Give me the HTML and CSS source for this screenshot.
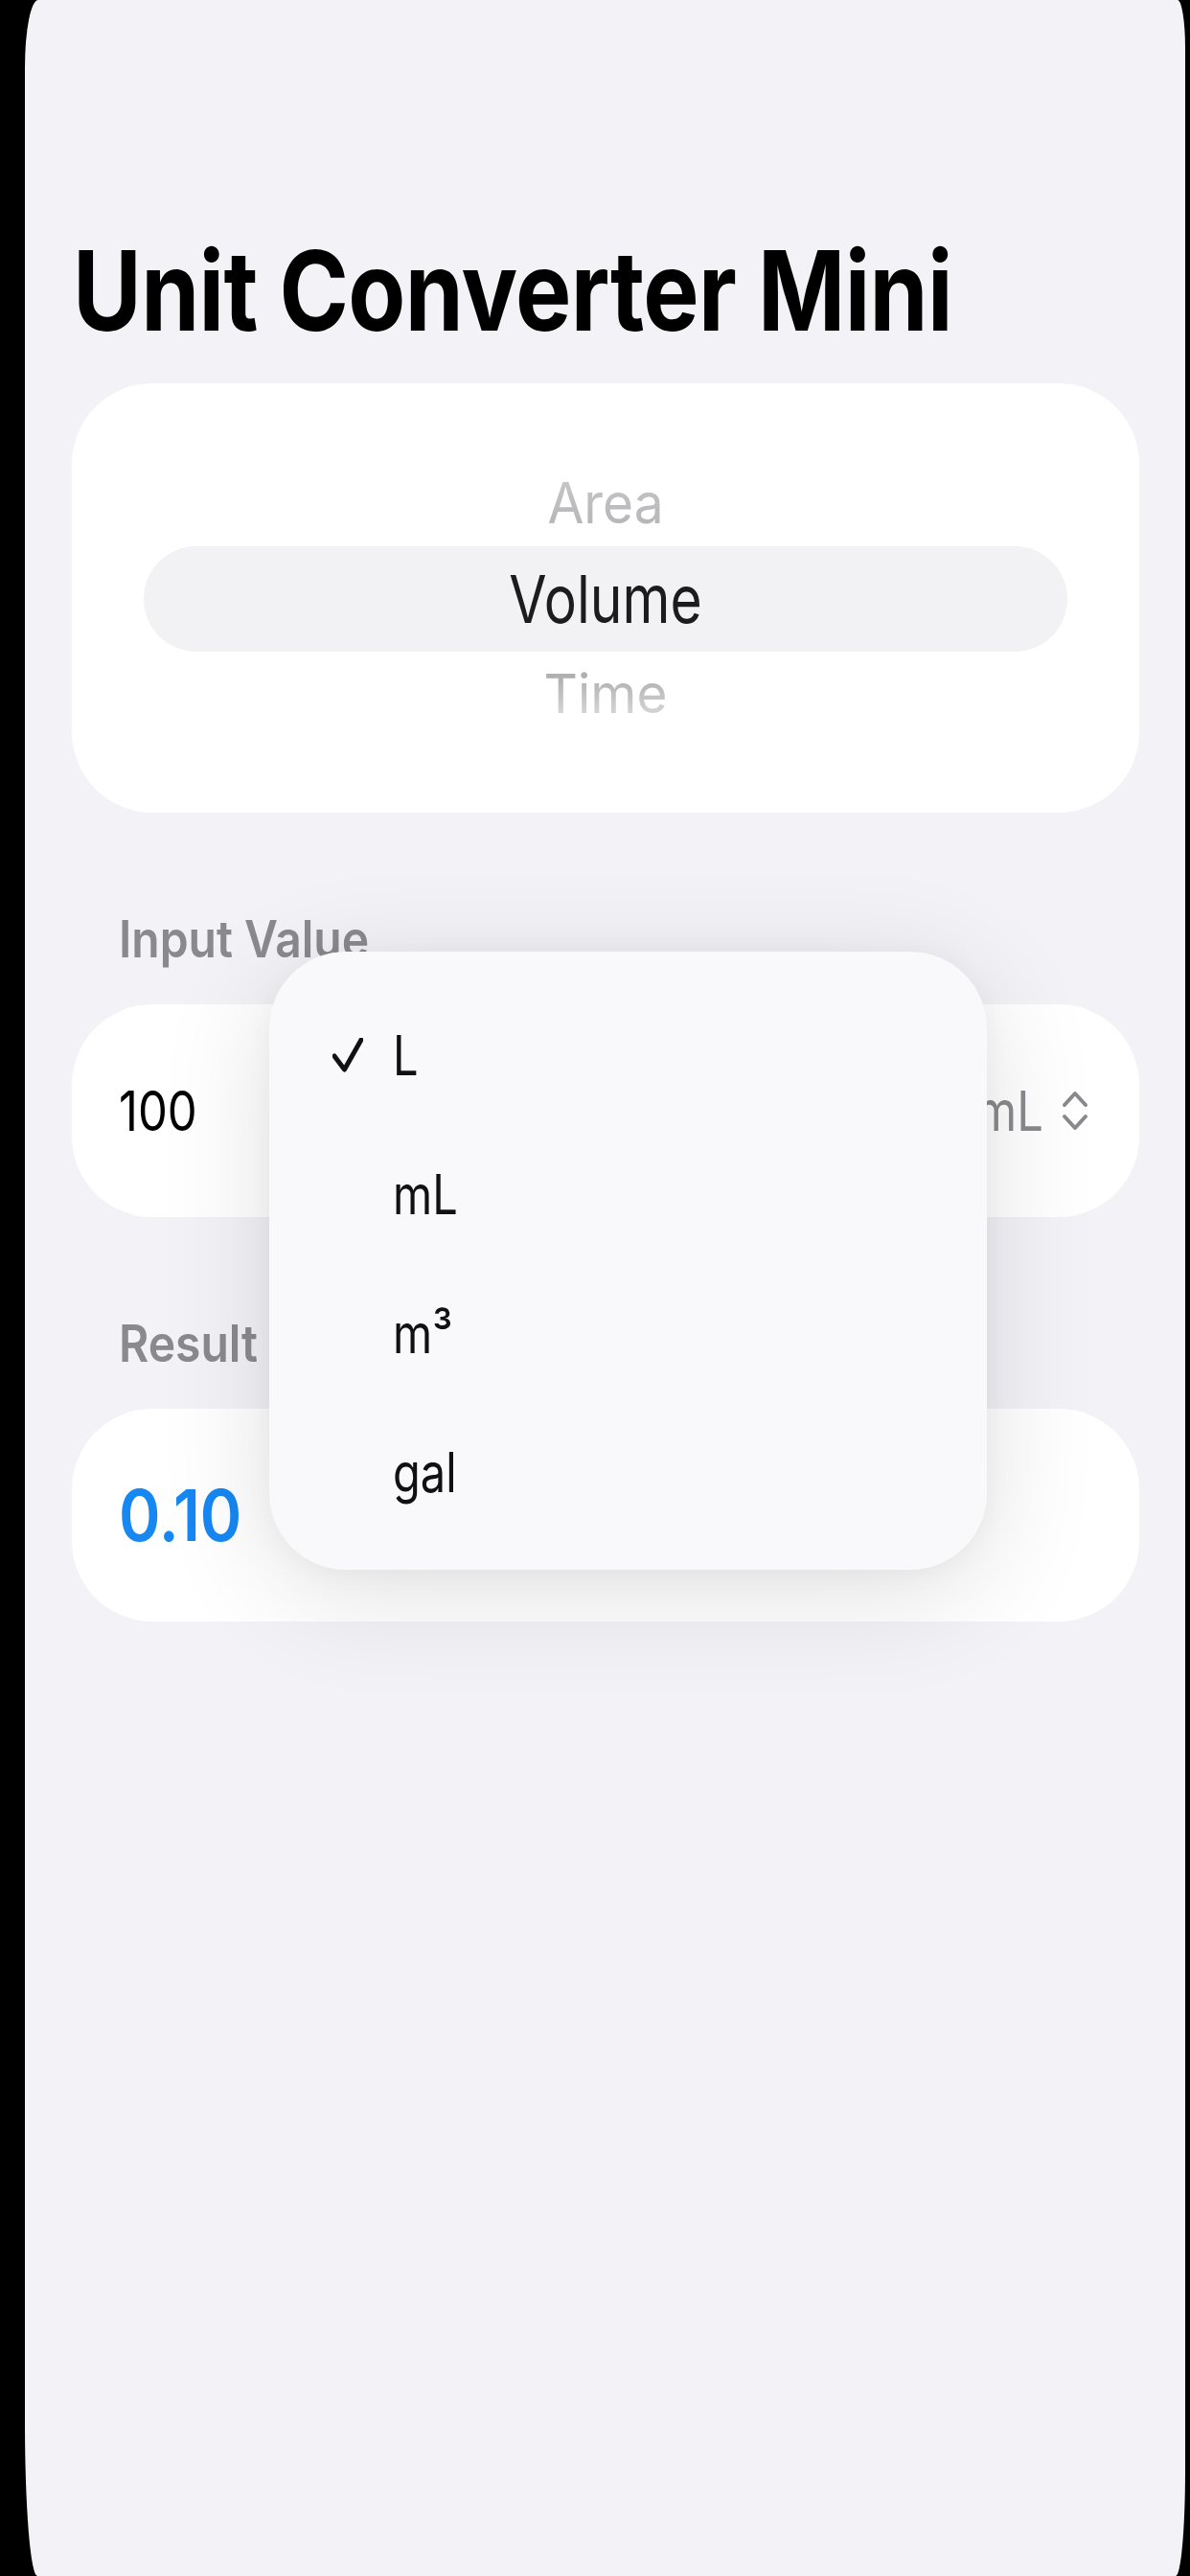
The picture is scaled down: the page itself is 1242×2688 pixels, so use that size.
FILE: index.html
```html
<!DOCTYPE html>
<html lang="en">
<head>
<meta charset="utf-8">
<title>Unit Converter Mini</title>
<link rel="stylesheet" href="styles.css">
</head>
<body>
<div class="screen">
  <h1 class="title"><span class="tx">Unit Converter Mini</span></h1>

  <div class="picker card">
    <div class="wheel-row wheel-above"><span class="tx">Area</span></div>
    <div class="wheel-row wheel-selected"><span class="tx">Volume</span></div>
    <div class="wheel-row wheel-below"><span class="tx">Time</span></div>
  </div>

  <div class="section">
    <div class="section-label"><span class="tx">Input Value</span></div>
    <div class="field card">
      <span class="value tx">100</span>
      <span class="unit-button">
        <span class="unit tx">mL</span>
        <svg class="chevrons" viewBox="0 0 30 46" width="30" height="46" aria-hidden="true">
          <path d="M4 17 L15 5 L26 17" />
          <path d="M4 29 L15 41 L26 29" />
        </svg>
      </span>
    </div>
  </div>

  <div class="section">
    <div class="section-label"><span class="tx">Result</span></div>
    <div class="field card">
      <span class="result tx">0.10</span>
    </div>
  </div>

  <div class="menu">
    <div class="menu-item">
      <svg class="check" viewBox="0 0 32 36" width="32" height="36" aria-hidden="true">
        <path d="M2 19 L12.5 33 L30 2" />
      </svg>
      <span class="tx">L</span>
    </div>
    <div class="menu-item"><span class="check-space"></span><span class="tx">mL</span></div>
    <div class="menu-item"><span class="check-space"></span><span class="tx">m³</span></div>
    <div class="menu-item"><span class="check-space"></span><span class="tx">gal</span></div>
  </div>
</div>
</body>
</html>
```

FILE: styles.css
```css
* { box-sizing: border-box; }

html, body {
  margin: 0;
  padding: 0;
  background: #000;
  height: 2688px;
  overflow: hidden;
}

body {
  font-family: Inter, "Noto Sans", "Liberation Sans", sans-serif;
  color: #000;
}

.screen {
  position: relative;
  margin: 0 5px 0 26px;
  height: 2688px;
  background: #f2f2f7;
  padding: 246px 48px 0 49px;
  border-top-left-radius: 14px 70px;
  border-top-right-radius: 8px 50px;
  border-bottom-left-radius: 13px 160px;
  border-bottom-right-radius: 10px 110px;
}

.tx {
  display: inline-block;
  transform-origin: 50% 50%;
}

.title {
  margin: 0;
  font-size: 98px;
  font-weight: 700;
  line-height: 116px;
  letter-spacing: -0.6px;
  padding-left: 1px;
}
.title .tx { transform: scaleY(1.18); }

.card {
  background: #fff;
  border-radius: 84px;
}

.picker {
  margin-top: 38px;
  padding: 80px 0 82px;
  display: flex;
  flex-direction: column;
}

.wheel-row {
  display: flex;
  justify-content: center;
  align-items: center;
  font-size: 55px;
  line-height: 1;
}

.wheel-above {
  height: 90px;
  color: #b4b4b7;
}
.wheel-above .tx {
  transform: scaleY(1.07);
  -webkit-mask-image: linear-gradient(to bottom, rgba(0,0,0,0.75), #000);
  mask-image: linear-gradient(to bottom, rgba(0,0,0,0.75), #000);
}

.wheel-selected {
  height: 110px;
  margin: 0 75px;
  border-radius: 55px;
  background: #f2f2f4;
  color: #1c1c1e;
  font-size: 57px;
}
.wheel-selected .tx { transform: scaleY(1.21); }

.wheel-below {
  height: 86px;
  color: #b0b0b3;
}
.wheel-below .tx {
  transform: scaleY(1.03);
  -webkit-mask-image: linear-gradient(to bottom, #000 20%, rgba(0,0,0,0.45));
  mask-image: linear-gradient(to bottom, #000 20%, rgba(0,0,0,0.45));
}

.section { margin-top: 102px; }

.section-label {
  height: 60px;
  line-height: 60px;
  padding-left: 49px;
  font-size: 48px;
  font-weight: 600;
  color: #8a8a8e;
}
.section-label .tx { transform: scaleY(1.12); }

.field {
  margin-top: 38px;
  height: 222px;
  display: flex;
  align-items: center;
  justify-content: space-between;
  padding: 0 52px 0 49px;
}

.value {
  font-size: 49px;
  line-height: 1;
  transform: scaleY(1.18);
}

.unit-button {
  display: flex;
  align-items: center;
  gap: 18px;
  color: #8a8a8e;
}
.unit {
  font-size: 49px;
  line-height: 1;
  transform: scaleY(1.18);
}
.chevrons {
  display: block;
}
.chevrons path {
  fill: none;
  stroke: #8a8a8e;
  stroke-width: 4;
  stroke-linecap: round;
  stroke-linejoin: round;
}

.result {
  font-size: 66px;
  font-weight: 600;
  line-height: 1;
  color: #1787f2;
  transform: scaleY(1.12);
}

.menu {
  position: absolute;
  left: 255px;
  top: 993px;
  width: 749px;
  height: 645px;
  padding: 35px 0 0 66px;
  border-radius: 80px;
  background: #f9f9fb;
  box-shadow: 0 24px 120px rgba(0, 0, 0, 0.12), 0 4px 30px rgba(0, 0, 0, 0.04);
}

.menu-item {
  height: 145px;
  display: flex;
  align-items: center;
  gap: 31px;
  font-size: 47px;
  line-height: 1;
  color: #111;
}
.menu-item .tx { transform: scaleY(1.22); }

.check, .check-space {
  flex: 0 0 32px;
  width: 32px;
  height: 36px;
  display: block;
}
.check path {
  fill: none;
  stroke: #111;
  stroke-width: 5;
  stroke-linecap: round;
  stroke-linejoin: round;
}
```
